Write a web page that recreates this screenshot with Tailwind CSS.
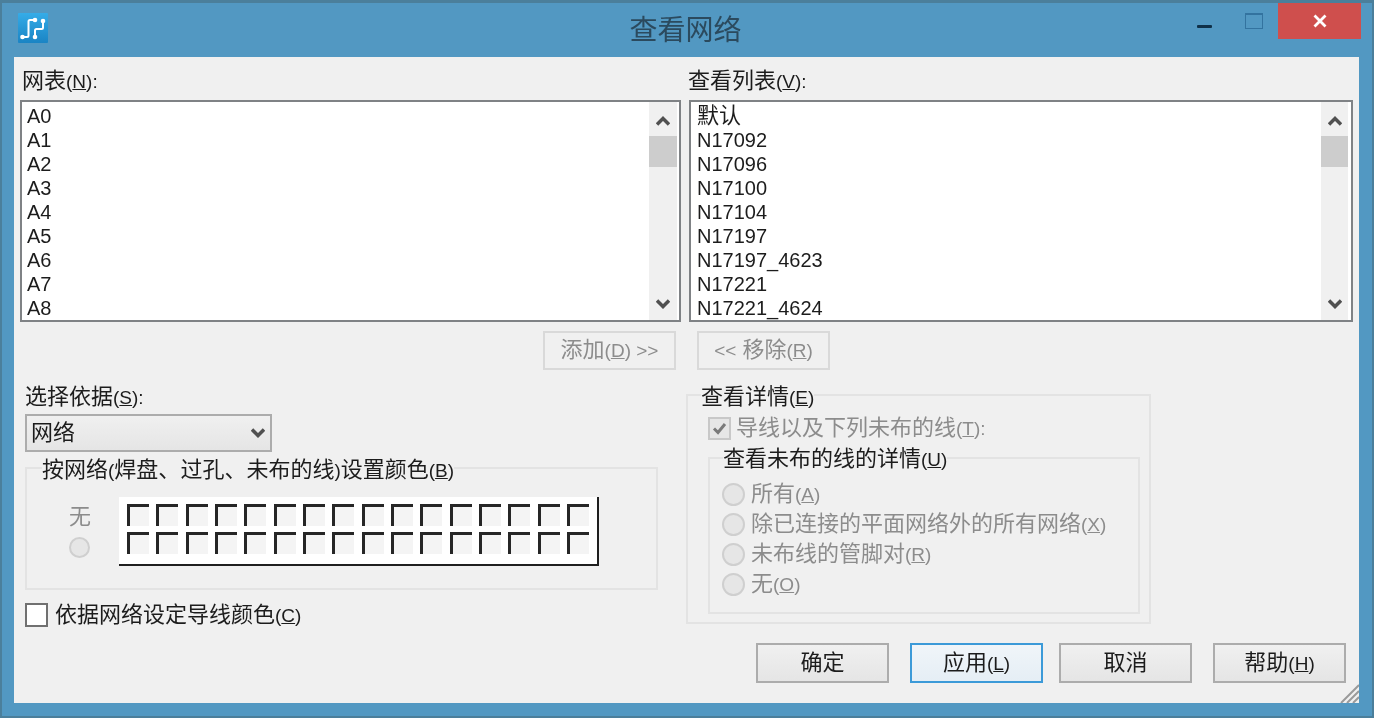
<!DOCTYPE html>
<html lang="zh-CN">
<head>
  <meta charset="UTF-8" />
  <title>查看网络</title>
  <script src="https://cdn.jsdelivr.net/npm/@tailwindcss/browser@4"></script>
</head>
<body class="bg-[#5298c2]">
  <div class="w-[1374px] h-[718px] overflow-hidden flex flex-col bg-[#5298c2] border-x-2 border-b-2 border-t-[3px] border-[#4b7f9b] text-[22px] leading-[24px] text-[#1c1c1c] font-['Liberation_Sans','Noto_Sans_CJK_SC',sans-serif] blur-[0.6px]">

    <!-- Title bar -->
    <div class="h-[54px] shrink-0 grid grid-cols-[1fr_auto_1fr]">
      <div class="pl-[16px] pt-[10px]">
        <svg width="30" height="30" viewBox="0 0 30 30">
          <defs>
            <linearGradient id="ico" x1="0" y1="0" x2="0" y2="1">
              <stop offset="0" stop-color="#35ace8" />
              <stop offset="1" stop-color="#1a84c4" />
            </linearGradient>
          </defs>
          <rect width="30" height="30" rx="1" fill="url(#ico)" />
          <path d="M4 24H9Q10.500 24 10.500 22.500V8.500Q10.500 7 12 7H17M17 24V17.500Q17 16 18.500 16H23.500Q25 16 25 14.500V8" fill="none" stroke="#fff" stroke-width="2" />
          <circle cx="4.500" cy="24" r="2.300" fill="#fff" />
          <circle cx="17" cy="7" r="2.300" fill="#fff" />
          <circle cx="17" cy="24" r="2.300" fill="#fff" />
          <circle cx="25" cy="8" r="2.300" fill="#fff" />
        </svg>
      </div>
      <div class="pt-[13px] pr-[3px] text-[28px] leading-[30px] text-[#2b4a5e]">查看网络</div>
      <div class="flex justify-end items-start pr-[11px]">
        <div class="mt-[22px] w-[15px] h-[3px] bg-[#0f3048] rounded-[1px]"></div>
        <div class="mt-[10px] ml-[33px] w-[18px] h-[16px] border border-t-2 border-[#33739f]"></div>
        <div class="ml-[15px] w-[83px] h-[36px] bg-[#cf4f4d] flex items-center justify-center">
          <svg width="14" height="14" viewBox="0 0 14 14"><path d="M1.500 1.500L12.500 12.500M12.500 1.500L1.500 12.500" stroke="#fff" stroke-width="2.800" /></svg>
        </div>
      </div>
    </div>

    <!-- Client area -->
    <div class="relative mx-[12px] w-[1345px] h-[646px] shrink-0 bg-[#f0f0f0] overflow-hidden">

      <!-- Net list / view list -->
      <div class="flex mt-[12px] ml-[6px]">
        <div class="w-[661px]">
          <div class="h-[24px] pl-[2px] mb-[7px]">网表<span class="text-[19px]">(<u>N</u>):</span></div>
          <div class="h-[222px] border-2 border-[#7f8285] bg-white flex overflow-hidden">
            <div class="flex-1 pl-[5px] pt-[2px] text-[20px]">
              <div>A0</div><div>A1</div><div>A2</div><div>A3</div><div>A4</div><div>A5</div><div>A6</div><div>A7</div><div>A8</div>
            </div>
            <div class="w-[28px] mr-[2px] bg-[#f0f0f0] flex flex-col items-center">
              <svg class="mt-[14px]" width="14" height="10" viewBox="0 0 14 10"><path d="M1 8.500L7 2.500L13 8.500" fill="none" stroke="#505050" stroke-width="3.500" /></svg>
              <div class="mt-[10px] w-full h-[31px] bg-[#cdcdcd]"></div>
              <svg class="mt-auto mb-[11px]" width="14" height="10" viewBox="0 0 14 10"><path d="M1 1.500L7 7.500L13 1.500" fill="none" stroke="#505050" stroke-width="3.500" /></svg>
            </div>
          </div>
          <div class="flex justify-end pr-[5px] mt-[9px]">
            <div class="w-[133px] h-[39px] border-2 border-[#d9d9d9] flex items-center justify-center text-[#8c8c8c]"><span>添加<span class="text-[19px]">(<u>D</u>) &gt;&gt;</span></span></div>
          </div>
        </div>
        <div class="w-[664px] ml-[8px]">
          <div class="h-[24px] -ml-[1px] mb-[7px]">查看列表<span class="text-[19px]">(<u>V</u>):</span></div>
          <div class="h-[222px] border-2 border-[#7f8285] bg-white flex overflow-hidden">
            <div class="flex-1 pl-[6px] pt-[2px] text-[20px]">
              <div class="h-[24px] text-[22px]">默认</div><div>N17092</div><div>N17096</div><div>N17100</div><div>N17104</div><div>N17197</div><div>N17197_4623</div><div>N17221</div><div>N17221_4624</div>
            </div>
            <div class="w-[27px] mr-[3px] bg-[#f0f0f0] flex flex-col items-center">
              <svg class="mt-[14px]" width="14" height="10" viewBox="0 0 14 10"><path d="M1 8.500L7 2.500L13 8.500" fill="none" stroke="#505050" stroke-width="3.500" /></svg>
              <div class="mt-[10px] w-full h-[31px] bg-[#cdcdcd]"></div>
              <svg class="mt-auto mb-[11px]" width="14" height="10" viewBox="0 0 14 10"><path d="M1 1.500L7 7.500L13 1.500" fill="none" stroke="#505050" stroke-width="3.500" /></svg>
            </div>
          </div>
          <div class="ml-[8px] mt-[9px] w-[133px] h-[39px] border-2 border-[#d9d9d9] flex items-center justify-center text-[#8c8c8c]"><span><span class="text-[19px]">&lt;&lt;</span> 移除<span class="text-[19px]">(<u>R</u>)</span></span></div>
        </div>
      </div>

      <!-- Lower section -->
      <div class="flex h-[239px] mt-[15px] ml-[11px]">
        <div class="w-[633px]">
          <div class="h-[24px]">选择依据<span class="text-[19px]">(<u>S</u>):</span></div>
          <div class="mt-[5px] w-[247px] h-[38px] border-2 border-[#acacac] bg-gradient-to-b from-[#f0f0f0] to-[#e5e5e5] flex items-center pl-[4px] pr-[5px]">
            <span class="flex-1">网络</span>
            <svg width="14" height="10" viewBox="0 0 14 10"><path d="M1 1.500L7 7.500L13 1.500" fill="none" stroke="#505050" stroke-width="3.500" /></svg>
          </div>
          <fieldset class="mt-[2px] h-[136px] border-2 border-[#e3e3e3]">
            <legend class="h-[28px] ml-[15px] pt-[1px]">按网络<span class="text-[19px]">(</span>焊盘<span class="font-['Noto_Sans_CJK_TC']">、</span>过孔<span class="font-['Noto_Sans_CJK_TC']">、</span>未布的线<span class="text-[19px]">)</span>设置颜色<span class="text-[19px]">(<u>B</u>)</span></legend>
            <div class="flex mt-[15px]">
              <div class="w-[92px] pl-[42px] pt-[8px]">
                <div class="w-[22px] text-[#8c8c8c]">无</div>
                <div class="mt-[8px] w-[21px] h-[21px] rounded-full border-2 border-[#cfcfcf] bg-[#e6e6e6]"></div>
              </div>
              <div id="swatches" class="w-[480px] h-[69px] bg-white border-r-2 border-b-2 border-[#1f1f1f] pl-[8px] pt-[7px] grid grid-cols-[repeat(16,29.33px)] auto-rows-[28px]"></div>
            </div>
          </fieldset>
          <div class="flex items-center h-[24px] mt-[13px]">
            <div class="w-[23px] h-[24px] border-2 border-[#707070] bg-white"></div>
            <span class="ml-[7px]">依据网络设定导线颜色<span class="text-[19px]">(<u>C</u>)</span></span>
          </div>
        </div>

        <fieldset class="ml-[28px] -mt-[4px] w-[465px] h-[243px] border-2 border-[#e3e3e3]">
          <legend class="h-[28px] ml-[13px] pt-[4px]">查看详情<span class="text-[19px]">(<u>E</u>)</span></legend>
          <div class="flex items-center ml-[20px] mt-[7px] h-[24px] text-[#8c8c8c]">
            <div class="w-[23px] h-[23px] border-2 border-[#c8c8c8] bg-[#e6e6e6] flex items-center justify-center">
              <svg width="15" height="13" viewBox="0 0 15 13"><path d="M2 6.500L6 10.500L13 2" fill="none" stroke="#7a7a7a" stroke-width="3" /></svg>
            </div>
            <span class="ml-[5px]">导线以及下列未布的线<span class="text-[19px]">(<u>T</u>):</span></span>
          </div>
          <fieldset class="ml-[20px] mt-[5px] w-[432px] h-[169px] border-2 border-[#e3e3e3]">
            <legend class="h-[26px] ml-[13px] pt-[2px]">查看未布的线的详情<span class="text-[19px]">(<u>U</u>)</span></legend>
            <div class="mt-[8px] ml-[12px] text-[#8c8c8c]">
              <div class="flex items-center h-[30px]"><div class="w-[23px] h-[23px] rounded-full border-2 border-[#cfcfcf] bg-[#e6e6e6]"></div><span class="ml-[6px]">所有<span class="text-[19px]">(<u>A</u>)</span></span></div>
              <div class="flex items-center h-[30px]"><div class="w-[23px] h-[23px] rounded-full border-2 border-[#cfcfcf] bg-[#e6e6e6]"></div><span class="ml-[6px]">除已连接的平面网络外的所有网络<span class="text-[19px]">(<u>X</u>)</span></span></div>
              <div class="flex items-center h-[30px]"><div class="w-[23px] h-[23px] rounded-full border-2 border-[#cfcfcf] bg-[#e6e6e6]"></div><span class="ml-[6px]">未布线的管脚对<span class="text-[19px]">(<u>R</u>)</span></span></div>
              <div class="flex items-center h-[30px]"><div class="w-[23px] h-[23px] rounded-full border-2 border-[#cfcfcf] bg-[#e6e6e6]"></div><span class="ml-[6px]">无<span class="text-[19px]">(<u>O</u>)</span></span></div>
            </div>
          </fieldset>
        </fieldset>
      </div>

      <!-- Dialog buttons -->
      <div class="flex mt-[19px] ml-[742px]">
        <div class="w-[133px] h-[40px] border-2 border-[#acacac] bg-gradient-to-b from-[#f0f0f0] to-[#e5e5e5] flex items-center justify-center">确定</div>
        <div class="ml-[21px] w-[133px] h-[40px] border-2 border-[#3c9ad8] bg-gradient-to-b from-[#f0f5f9] to-[#e5eef5] flex items-center justify-center"><span>应用<span class="text-[19px]">(<u>L</u>)</span></span></div>
        <div class="ml-[16px] w-[133px] h-[40px] border-2 border-[#acacac] bg-gradient-to-b from-[#f0f0f0] to-[#e5e5e5] flex items-center justify-center">取消</div>
        <div class="ml-[21px] w-[133px] h-[40px] border-2 border-[#acacac] bg-gradient-to-b from-[#f0f0f0] to-[#e5e5e5] flex items-center justify-center"><span>帮助<span class="text-[19px]">(<u>H</u>)</span></span></div>
      </div>

      <!-- Resize grip -->
      <svg class="absolute right-0 bottom-0" width="20" height="20" viewBox="0 0 20 20">
        <path d="M20 2L2 20M20 8L8 20M20 14L14 20" stroke="#9a9a9a" stroke-width="2" />
      </svg>
    </div>
  </div>

  <script>
    // 32 colour swatches, two rows of 16
    document.getElementById('swatches').innerHTML = Array.from({ length: 32 }, () =>
      '<div class="w-[22px] h-[22px] bg-[#f4f4f4] border-t-[3px] border-l-[3px] border-[#262626]"></div>'
    ).join('');
  </script>
</body>
</html>
